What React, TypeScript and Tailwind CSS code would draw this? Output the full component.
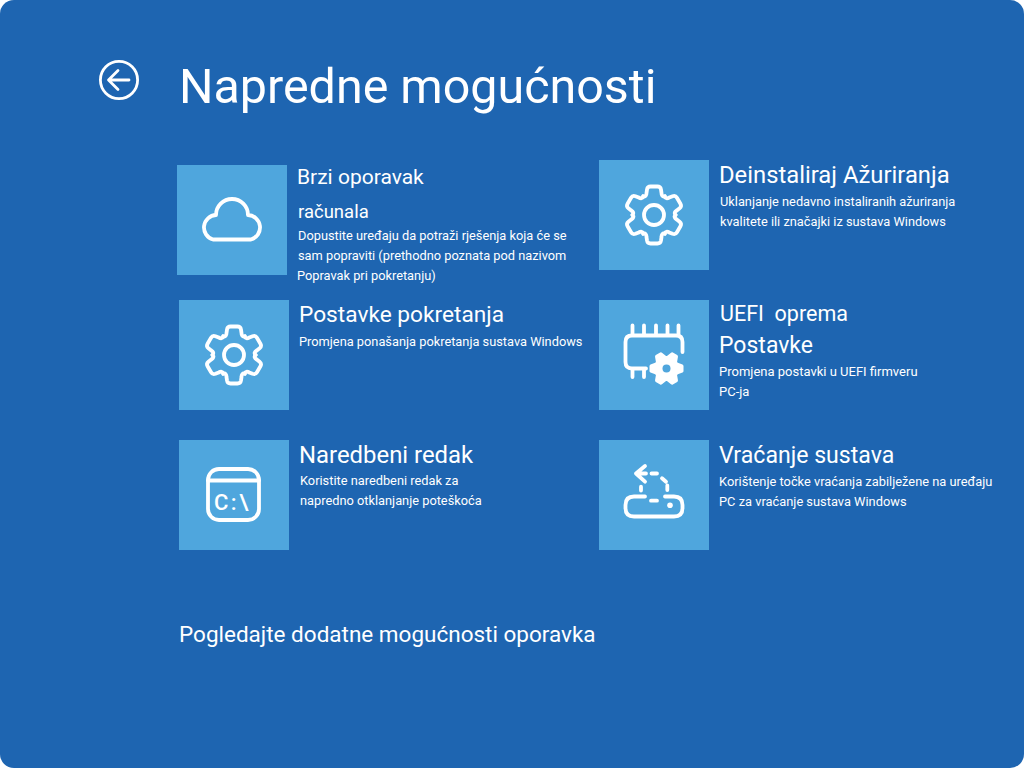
import type { ReactNode } from 'react'

const TOOTH =
  'M-10.8 -18.7C-8.5 -18 -7.5 -19.5 -7.5 -22L-7 -25.5Q-6.5 -28.5 -3.5 -28.5L3.5 -28.5Q6.5 -28.5 7 -25.5L7.5 -22C7.5 -19.5 8.5 -18 10.8 -18.7'

function IconSvg({ children }: { children: ReactNode }) {
  return (
    <svg
      viewBox="0 0 110 110"
      className="w-full h-full"
      fill="none"
      stroke="#fff"
      strokeWidth="3.8"
      strokeLinecap="round"
      strokeLinejoin="round"
    >
      {children}
    </svg>
  )
}

function CloudIcon() {
  return (
    <IconSvg>
      <path d="M36 74.5H74A12.500 12.500 0 0 0 71 50A16 16 0 0 0 39 50A12.500 12.500 0 0 0 36 74.5Z" />
    </IconSvg>
  )
}

function GearIcon() {
  return (
    <IconSvg>
      <g transform="translate(55 55)">
        {[0, 60, 120, 180, 240, 300].map((a) => (
          <path key={a} d={TOOTH} transform={`rotate(${a})`} />
        ))}
        <circle r="10" />
      </g>
    </IconSvg>
  )
}

function ChipIcon() {
  return (
    <IconSvg>
      <path d="M47 68.500H33Q26.500 68.500 26.500 62V42Q26.500 35.500 33 35.500H77Q83.500 35.500 83.500 42V52" />
      <path d="M33.500 25.500V35M45 25.500V35M57 25.500V35M68.500 25.500V35M79.500 25.500V35M33.500 69V77M45 69V77" />
      <g transform="translate(67.500 68.500)" fill="#fff" stroke="none">
        <circle r="12.500" />
        {[0, 60, 120].map((a) => (
          <path key={a} d="M-17 -2.500Q-17 -3.500 -16 -4L-8 -7H8L16 -4Q17 -3.500 17 -2.500V2.500Q17 3.500 16 4L8 7H-8L-16 4Q-17 3.500 -17 2.500Z" transform={`rotate(${a})`} />
        ))}
        <circle r="4" fill="#4fa6dd" />
      </g>
    </IconSvg>
  )
}

function TerminalIcon() {
  return (
    <IconSvg>
      <rect x="29" y="29" width="51" height="51" rx="11" />
      <path d="M29 40.500H80" />
      <text
        x="35"
        y="70"
        fill="#fff"
        stroke="none"
        fontSize="22"
        fontWeight="500"
        letterSpacing="2.5"
        fontFamily="'Roboto', sans-serif"
      >
        C:\
      </text>
    </IconSvg>
  )
}

function RestoreIcon() {
  return (
    <IconSvg>
      <path d="M46 26L37 33.500L46 41.700M37 33.500H47" />
      <path d="M52.500 33.500H58M63 38.300L67 41.700M68.300 45.500V50M42 46.700V50.500M52 60.700H58" />
      <path d="M46 56.500H35Q26.500 56.500 26.500 65V68Q26.500 76.500 35 76.500H75Q83.500 76.500 83.500 68V65Q83.500 56.500 75 56.500H66" />
      <circle cx="71" cy="65.300" r="2.800" fill="#fff" stroke="none" />
    </IconSvg>
  )
}

function Tile({ children }: { children: ReactNode }) {
  return <div className="w-[110px] h-[110px] shrink-0 bg-[#4fa6dd]">{children}</div>
}

export default function App() {
  return (
    <div className="w-[1024px] h-[768px] bg-white">
      <div className="w-full h-full rounded-[14px] bg-[#1e65b1] text-white overflow-hidden font-['Roboto',sans-serif]">
        <header className="flex pt-[59px] pl-[98px] h-[160px]">
          <svg viewBox="0 0 42 42" className="w-[42px] h-[42px]" fill="none" stroke="#fff" strokeWidth="2.800" strokeLinecap="round" strokeLinejoin="round">
            <circle cx="21" cy="21" r="18.600" />
            <path d="M11 21H31M20 11.500L10.500 21L20 30.500" />
          </svg>
          <h1 className="ml-[39px] mt-[-2px] text-[48.400px] leading-[60px] font-normal">Napredne mogućnosti</h1>
        </header>

        <main className="grid grid-cols-[422px_1fr] grid-rows-[140px_140px_140px] pl-[177px]">
          <section className="flex pt-[5px] gap-[10px]">
            <Tile>
              <CloudIcon />
            </Tile>
            <div className="flex flex-col">
              <h2 className="text-[21px] leading-[24px]">Brzi oporavak</h2>
              <h3 className="mt-[11px] ml-px text-[18.500px] leading-[24px] font-normal">računala</h3>
              <p className="mt-[2px] ml-px text-[12.800px] leading-[20px]">
                Dopustite uređaju da potraži rješenja koja će se
                <br />
                sam popraviti (prethodno poznata pod nazivom
                <br />
                <span className="-ml-px">Popravak pri pokretanju)</span>
              </p>
            </div>
          </section>

          <section className="flex gap-[11px]">
            <Tile>
              <GearIcon />
            </Tile>
            <div className="flex flex-col">
              <h2 className="text-[23.800px] leading-[28px] mt-px -ml-px">Deinstaliraj Ažuriranja</h2>
              <p className="mt-[3px] text-[12.800px] leading-[20px]">
                Uklanjanje nedavno instaliranih ažuriranja
                <br />
                kvalitete ili značajki iz sustava Windows
              </p>
            </div>
          </section>

          <section className="flex ml-[2px] gap-[10px]">
            <Tile>
              <GearIcon />
            </Tile>
            <div className="flex flex-col">
              <h2 className="text-[22.700px] leading-[28px] mt-px">Postavke pokretanja</h2>
              <p className="mt-[3px] text-[12.800px] leading-[20px]">Promjena ponašanja pokretanja sustava Windows</p>
            </div>
          </section>

          <section className="flex gap-[11px]">
            <Tile>
              <ChipIcon />
            </Tile>
            <div className="flex flex-col">
              <h2 className="text-[21.500px] leading-[28px] whitespace-pre">UEFI  oprema</h2>
              <h3 className="mt-[4px] text-[23px] leading-[28px] -ml-px">Postavke</h3>
              <p className="mt-[2px] -ml-px text-[13px] leading-[20px]">
                Promjena postavki u UEFI firmveru
                <br />
                PC-ja
              </p>
            </div>
          </section>

          <section className="flex ml-[2px] gap-[10px]">
            <Tile>
              <TerminalIcon />
            </Tile>
            <div className="flex flex-col">
              <h2 className="text-[23.900px] leading-[28px] mt-px">Naredbeni redak</h2>
              <p className="mt-[2px] ml-px text-[12.800px] leading-[20px]">
                Koristite naredbeni redak za
                <br />
                napredno otklanjanje poteškoća
              </p>
            </div>
          </section>

          <section className="flex gap-[10px]">
            <Tile>
              <RestoreIcon />
            </Tile>
            <div className="flex flex-col">
              <h2 className="text-[23.100px] leading-[28px] mt-[2px]">Vraćanje sustava</h2>
              <p className="mt-[2px] text-[12.850px] leading-[20px]">
                Korištenje točke vraćanja zabilježene na uređaju
                <br />
                PC za vraćanje sustava Windows
              </p>
            </div>
          </section>
        </main>

        <p className="mt-[40px] ml-[179px] text-[22.500px] leading-[28px]">Pogledajte dodatne mogućnosti oporavka</p>
      </div>
    </div>
  )
}
